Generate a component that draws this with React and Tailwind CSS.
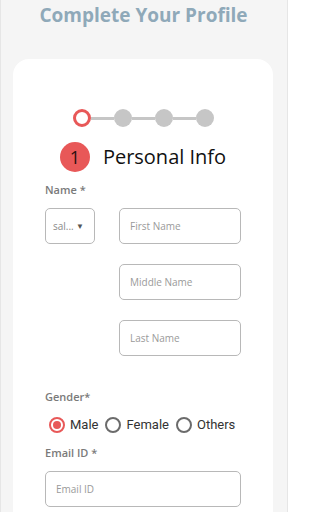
import React from 'react';

const Field = ({ placeholder, className = "" }) => (
  <div className={`h-[36px] rounded-[5px] border border-[#b8b8b8] bg-white flex items-center px-[10px] ${className}`}>
    <span className="text-[10px] text-[#9a9a9a]" style={{ fontFamily: '"Open Sans", sans-serif' }}>{placeholder}</span>
  </div>
);

const Label = ({ children, className = "" }) => (
  <div className={`text-[11px] leading-[14px] font-semibold text-[#7a7a7a] ${className}`}>{children}</div>
);

const Radio = ({ label, checked }) => (
  <label className="flex items-center gap-[5px]">
    <span className={`w-[16px] h-[16px] rounded-full border-2 flex items-center justify-center ${checked ? "border-[#e85858]" : "border-[#6b6b6b]"}`}>
      {checked && <span className="w-[8px] h-[8px] rounded-full bg-[#e85858]" />}
    </span>
    <span className="text-[13px] text-[#333]" style={{ fontFamily: 'Roboto, sans-serif' }}>{label}</span>
  </label>
);

export default function App() {
  return (
    <div
      className="w-[288px] h-[512px] overflow-hidden bg-[#f5f5f5] border-x border-[#e6e6e6]"
      style={{ fontFamily: '"Open Sans", sans-serif' }}
    >
      <h1 className="text-center text-[19px] leading-[24px] font-bold text-[#8fa9b9] pt-[3px] pr-[1px]">
        Complete Your Profile
      </h1>

      <div className="mt-[32px] ml-[12px] w-[260px] bg-white rounded-[16px] px-[32px] pt-[50px] pb-[20px]">
        {/* stepper */}
        <div className="flex items-center justify-center">
          <span className="w-[18px] h-[18px] rounded-full border-[3px] border-[#e85858] bg-white" />
          <span className="w-[23px] h-[3px] bg-[#c6c6c6]" />
          <span className="w-[18px] h-[18px] rounded-full bg-[#c6c6c6]" />
          <span className="w-[23px] h-[3px] bg-[#c6c6c6]" />
          <span className="w-[18px] h-[18px] rounded-full bg-[#c6c6c6]" />
          <span className="w-[23px] h-[3px] bg-[#c6c6c6]" />
          <span className="w-[18px] h-[18px] rounded-full bg-[#c6c6c6]" />
        </div>

        <div className="mt-[15px] flex items-center justify-center gap-[13px]">
          <span className="w-[30px] h-[30px] rounded-full bg-[#e85858] flex items-center justify-center text-[18px] text-[#2a1010]">1</span>
          <span className="text-[20px] leading-[26px] text-[#111]">Personal Info</span>
        </div>

        <Label className="mt-[11px]">Name *</Label>

        <div className="mt-[11px] flex gap-[24px]">
          <div className="w-[50px] h-[36px] rounded-[5px] border border-[#b8b8b8] flex items-center justify-between pl-[7px] pr-[10px] shrink-0">
            <span className="text-[10px] text-[#8a8a8a]">sal...</span>
            <span className="text-[8px] text-[#555]">▼</span>
          </div>
          <div className="flex-1 flex flex-col gap-[20px]">
            <Field placeholder="First Name" />
            <Field placeholder="Middle Name" className="px-[7px]" />
            <Field placeholder="Last Name" className="px-[7px]" />
          </div>
        </div>

        <Label className="mt-[34px]">Gender*</Label>

        <div className="mt-[11px] h-[20px] flex items-center gap-[7px] pl-[4px]">
          <Radio label="Male" checked />
          <Radio label="Female" />
          <Radio label="Others" />
        </div>

        <Label className="mt-[11px]">Email ID *</Label>

        <Field placeholder="Email ID" className="mt-[11px] px-[9px]" />
      </div>
    </div>
  );
}
